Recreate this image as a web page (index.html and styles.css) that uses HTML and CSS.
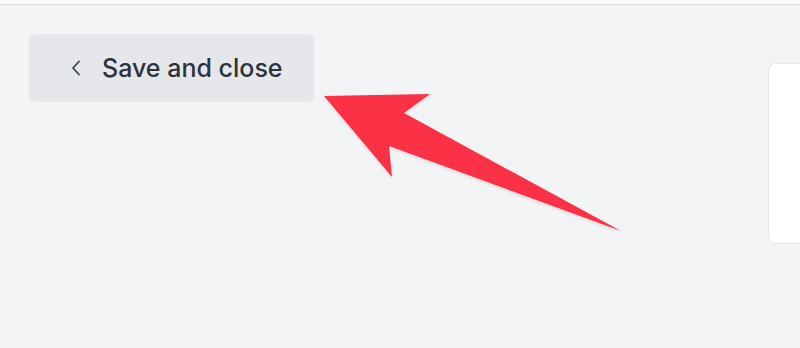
FILE: index.html
```html
<!DOCTYPE html>
<html>
<head>
<meta charset="utf-8">
<link rel="stylesheet" href="styles.css">
</head>
<body>
<div class="topbar"></div>
<main class="page">
  <div class="left">
    <button class="back-btn">
      <svg class="chev" width="10" height="16" viewBox="0 0 10 16"><path d="M8 1.5 L2 8 L8 14.5" fill="none" stroke="#374151" stroke-width="1.8" stroke-linecap="round" stroke-linejoin="round"/></svg>
      <span>Save and close</span>
    </button>
  </div>
  <div class="card"></div>
</main>
<svg class="arrow" width="800" height="348" viewBox="0 0 800 348">
  <defs>
    <filter id="sh" x="-10%" y="-10%" width="120%" height="130%">
      <feDropShadow dx="0" dy="1.5" stdDeviation="1.5" flood-color="#000" flood-opacity="0.12"/>
    </filter>
  </defs>
  <polygon points="324,96 430,94 404,113 621,231 389,146 392,177" fill="#fb3244" filter="url(#sh)"/>
</svg>
</body>
</html>
```
FILE: styles.css
```css
html, body {
  margin: 0;
  padding: 0;
}
body {
  width: 800px;
  height: 348px;
  overflow: hidden;
  background: #f3f4f6;
  font-family: Inter, "Noto Sans", sans-serif;
  position: relative;
}
.topbar {
  height: 4px;
  background: #f9fafb;
  border-bottom: 1px solid #d6d9de;
}
.page {
  display: flex;
  justify-content: space-between;
  padding: 29px 0 0 29px;
}
.back-btn {
  display: flex;
  align-items: center;
  gap: 21px;
  height: 68px;
  width: 285px;
  padding: 0 0 0 42px;
  border: none;
  border-radius: 6px;
  background: #e5e7eb;
  color: #2d333d;
  font-family: Inter, "Noto Sans", sans-serif;
  font-size: 25px;
  font-weight: 500;
  letter-spacing: 0;
  box-sizing: border-box;
}
.chev {
  display: block;
}
.card {
  margin-top: 29px;
  width: 32px;
  height: 181px;
  background: #ffffff;
  border: 1px solid #e5e7eb;
  border-right: none;
  border-radius: 8px 0 0 8px;
  box-sizing: border-box;
}
.arrow {
  position: absolute;
  left: 0;
  top: 0;
  pointer-events: none;
}
```
